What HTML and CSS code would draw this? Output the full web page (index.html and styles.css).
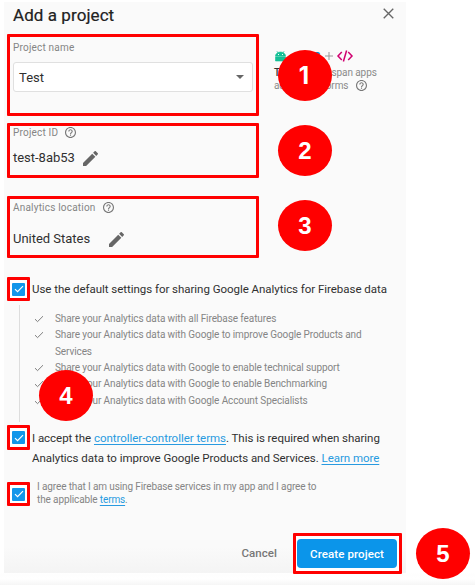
FILE: index.html
```html
<!DOCTYPE html>
<html lang="en">
<head>
<meta charset="utf-8">
<title>Add a project</title>
<link rel="stylesheet" href="styles.css">
</head>
<body>
<svg class="defs" aria-hidden="true">
  <symbol id="help" viewBox="2 2 20 20"><path d="M11 18h2v-2h-2v2zm1-16C6.480 2 2 6.480 2 12s4.480 10 10 10 10-4.480 10-10S17.520 2 12 2zm0 18c-4.410 0-8-3.590-8-8s3.590-8 8-8 8 3.590 8 8-3.590 8-8 8zm0-14c-2.210 0-4 1.790-4 4h2c0-1.100.9-2 2-2s2 .9 2 2c0 2-3 1.750-3 5h2c0-2.250 3-2.500 3-5 0-2.210-1.790-4-4-4z"/></symbol>
  <symbol id="edit" viewBox="3 3 18 18"><path d="M3 17.250V21h3.750L17.810 9.940l-3.750-3.750L3 17.250zM20.710 7.040a1 1 0 0 0 0-1.410l-2.340-2.340a1 1 0 0 0-1.410 0l-1.830 1.830 3.750 3.750 1.830-1.830z"/></symbol>
  <symbol id="tick" viewBox="0 0 12 10"><path d="M1 5.200 4.200 8.300 11 1.500" fill="none" stroke="currentColor"/></symbol>
</svg>
<main class="panel">
  <header class="header">
    <h1>Add a project</h1>
    <svg class="close" viewBox="0 0 12 12"><path d="M.8.8 11.200 11.200M11.200.8.8 11.200"/></svg>
  </header>

  <div class="top">
    <section class="frame name-field">
      <label class="label">Project name</label>
      <div class="select"><span>Test</span><i class="caret"></i></div>
    </section>
    <aside class="tip">
      <div class="platforms">
        <svg class="android" viewBox="0 0 11 11"><path d="M.5 5.700h10V10H.5zM.5 5a5 4 0 0 1 10 0zM1.800 0 3 2M9.200 0 8 2"/><path class="eyes" d="M3 3h1v1H3zM7 3h1v1H7z"/></svg>
        <span class="ios">iOS</span>
        <svg class="plus" viewBox="0 0 8 8"><path d="M4 0v8M0 4h8"/></svg>
        <svg class="code" viewBox="0 0 16 12"><path d="M4.800 2 1 6l3.800 4M11.200 2 15 6l-3.800 4M9.600.5 6.400 11.500"/></svg>
      </div>
      <p><b>Tip:</b> Projects span apps</p>
      <p>across platforms <svg class="help"><use href="#help"/></svg></p>
      <span class="badge beside-name">1</span>
    </aside>
  </div>

  <section class="frame id-field">
    <div class="label">Project ID <svg class="help"><use href="#help"/></svg></div>
    <div class="value id-value">test-8ab53 <svg class="edit"><use href="#edit"/></svg></div>
    <span class="badge beside-id">2</span>
  </section>

  <section class="frame location-field">
    <div class="label">Analytics location <svg class="help"><use href="#help"/></svg></div>
    <div class="value location-value">United States <svg class="edit"><use href="#edit"/></svg></div>
    <span class="badge beside-location">3</span>
  </section>

  <section class="option share">
    <span class="frame check"><i class="box"><svg><use href="#tick"/></svg></i></span>
    <p class="share-title">Use the default settings for sharing Google Analytics for Firebase data</p>
  </section>
  <ul class="benefits">
    <li><svg><use href="#tick"/></svg><span>Share your Analytics data with all Firebase features</span></li>
    <li><svg><use href="#tick"/></svg><span>Share your Analytics data with Google to improve Google Products and<br>Services</span></li>
    <li><svg><use href="#tick"/></svg><span>Share your Analytics data with Google to enable technical support</span></li>
    <li><svg><use href="#tick"/></svg><span>Share your Analytics data with Google to enable Benchmarking</span></li>
    <li><svg><use href="#tick"/></svg><span>Share your Analytics data with Google Account Specialists</span></li>
    <li class="badge on-benefits">4</li>
  </ul>

  <section class="option accept">
    <span class="frame check"><i class="box"><svg><use href="#tick"/></svg></i></span>
    <div class="accept-text">
      <p>I accept the <a>controller-controller terms</a>. This is required when sharing</p>
      <p>Analytics data to improve Google Products and Services. <a>Learn more</a></p>
    </div>
  </section>

  <section class="option agree">
    <span class="frame check"><i class="box"><svg><use href="#tick"/></svg></i></span>
    <div class="agree-text">
      <p>I agree that I am using Firebase services in my app and I agree to</p>
      <p>the applicable <a>terms</a>.</p>
    </div>
  </section>

  <footer class="footer">
    <span class="cancel">Cancel</span>
    <div class="frame submit"><button>Create project</button><span class="badge beside-submit">5</span></div>
  </footer>
</main>
</body>
</html>
```
FILE: styles.css
```css
* { box-sizing: border-box; }
body { margin: 0; padding: 2px 0 0 4px; height: 585px; overflow: hidden; background: linear-gradient(#fff 573px, #fefefe 574px, #fff 579px, #f6f6f6 585px); font-family: Roboto, "Liberation Sans", sans-serif; color: #303030; }
h1, p, ul { margin: 0; padding: 0; }
.defs { display: none; }
svg { display: block; flex: none; overflow: visible; fill: currentColor; }
.panel { width: 402px; height: 571px; padding-left: 3px; background: linear-gradient(#fafafa 545px, #f4f4f4); white-space: nowrap; }
.header { height: 32px; display: flex; justify-content: space-between; padding: 3px 12px 0 6px; }
h1 { font-size: 17px; line-height: 20px; font-weight: 400; letter-spacing: .07px; color: #222; -webkit-text-stroke: .2px #222; }
.close { width: 11px; height: 11px; margin-top: 3px; stroke: #666; stroke-width: 1.500; }
.frame { position: relative; border: 3px solid #f00; border-radius: 1px; }
.top { display: flex; gap: 15px; }
.name-field { width: 252px; height: 82px; padding: 4px 3px 0; }
.label { display: flex; align-items: center; font-size: 10px; line-height: 13px; color: #858585; letter-spacing: .2px; }
.help { width: 11px; height: 11px; color: #777; }
.select { display: flex; align-items: center; justify-content: space-between; height: 30px; margin-top: 8px; padding: 0 8px 0 5px; border: 1px solid #e0e0e0; border-radius: 3px; background: #fff; font-size: 13px; }
.caret { border: 4px solid transparent; border-top: 4px solid #666; border-bottom: 0; }
.tip { position: relative; padding-top: 16px; font-size: 10px; line-height: 13px; color: #8a8a8a; letter-spacing: -.08px; }
.tip p { display: flex; align-items: center; white-space: pre; }
.tip p .help { margin-left: 5px; }
.tip b { font-weight: 500; color: #333; }
.platforms { display: flex; align-items: center; height: 12px; margin-bottom: 4px; }
.android { width: 11px; height: 11px; margin-left: 1px; color: #14bf96; stroke: #14bf96; stroke-width: .6; }
.android .eyes { fill: #fff; stroke: none; }
.ios { margin-left: 17px; width: 17px; font-size: 11px; font-weight: 700; color: #0288d1; letter-spacing: 0; }
.plus { width: 8px; height: 8px; margin-left: 5px; stroke: #999; }
.code { width: 16px; height: 12px; margin-left: 4px; fill: none; stroke: #d00070; stroke-width: 1.500; }
.badge { position: absolute; z-index: 2; display: flex; align-items: center; justify-content: center; width: 54px; height: 51px; border-radius: 50%; background: #f00; color: #fff; font: 700 24px/1 "Liberation Sans", sans-serif; letter-spacing: 0; }
.beside-name { left: 4px; top: 16px; font-family: Inter, sans-serif; padding-right: 2px; }
.beside-id { left: 268px; top: -1px; }
.beside-location { left: 268px; top: 1px; }
.benefits .on-benefits { display: flex; left: 19px; top: 65px; }
.beside-submit { left: 120px; top: -8px; }
.id-field { width: 252px; height: 55px; margin-top: 7px; padding: 0 3px; }
.label .help { margin-left: 7px; }
.value { display: flex; align-items: center; font-size: 13px; line-height: 16px; letter-spacing: -.02px; }
.edit { width: 15px; height: 15px; color: #666; margin-left: 8px; }
.id-value { margin-top: 11px; }
.location-field { width: 252px; height: 62px; margin-top: 18px; padding: 2px 3px 0; }
.location-value { margin-top: 17px; }
.location-value .edit { margin-left: 19px; }
.option { display: flex; align-items: flex-start; }
.check { flex: none; width: 23px; height: 24px; display: grid; place-items: center; background: #fff; }
.box { display: grid; place-items: center; width: 13px; height: 13px; border-radius: 1px; background: #1296ea; color: #fff; }
.box svg { width: 10px; height: 8px; stroke-width: 1.500; }
.share { margin-top: 19px; }
.share-title { margin: 4px 0 0 2px; font-size: 11.500px; line-height: 16px; letter-spacing: -.04px; }
.benefits { position: relative; height: 117px; margin: 4px 0 0 12px; padding: 6px 0 0 14px; border-left: 1px solid #ddd; list-style: none; font-size: 10px; line-height: 16.350px; letter-spacing: -.1px; color: #858585; }
.benefits li { display: flex; }
.benefits li svg { width: 10px; height: 8px; margin: 4px 11px 0 0; stroke-width: 1.200; color: #777; }
.accept { margin-top: 3px; }
.accept .check { height: 25px; }
.accept-text { margin: 3px 0 0 2px; font-size: 11.500px; line-height: 20px; letter-spacing: -.04px; }
a { color: #289ae0; text-decoration: underline; text-underline-offset: 2px; }
.agree { margin-top: 14px; }
.agree-text { margin-left: 7px; margin-top: -2px; font-size: 10px; line-height: 13px; letter-spacing: -.12px; color: #858585; }
.footer { display: flex; justify-content: flex-end; padding-right: 4px; margin-top: 27px; }
.cancel { margin: 13px 16px 0 0; font-size: 11.500px; line-height: 15px; font-weight: 500; letter-spacing: .05px; color: #777; }
.submit { width: 109px; height: 41px; padding: 3px 2px 0 1px; background: #fff; }
button { display: block; width: 100%; height: 29px; padding: 0; border: 0; border-radius: 4px; background: #0b95ea; color: #fff; font: 500 11.500px Roboto, sans-serif; letter-spacing: .1px; }
```
